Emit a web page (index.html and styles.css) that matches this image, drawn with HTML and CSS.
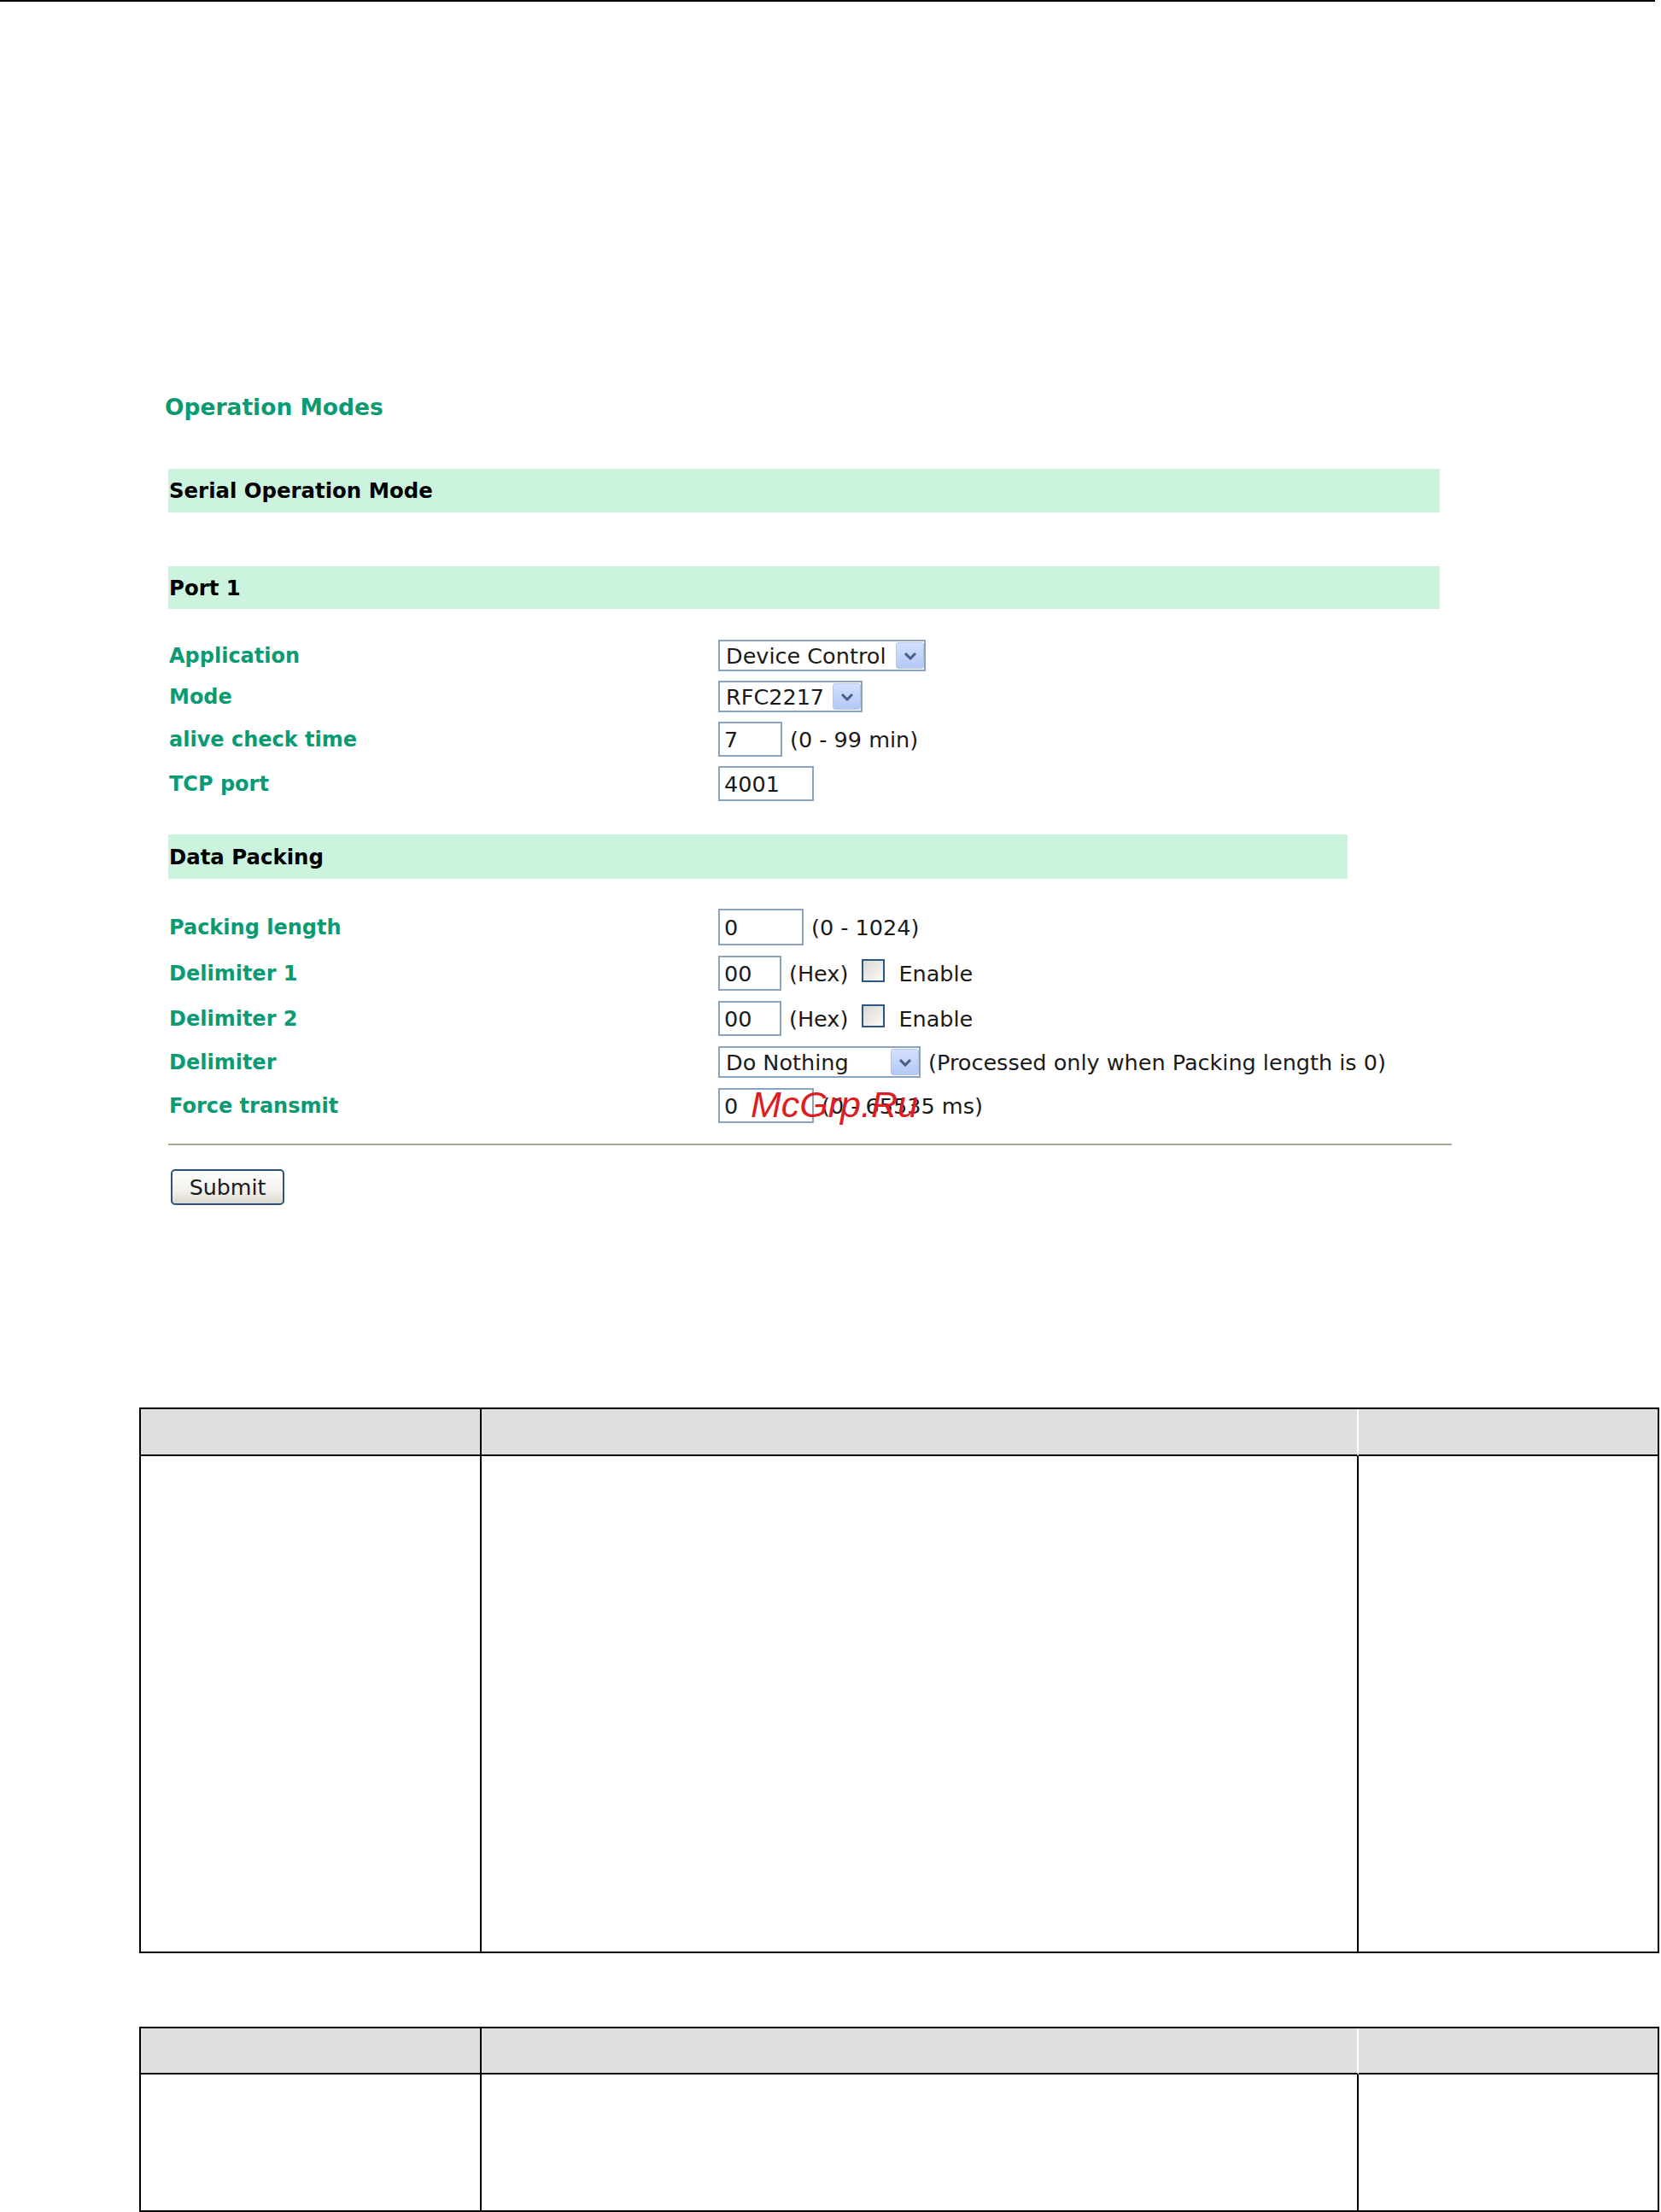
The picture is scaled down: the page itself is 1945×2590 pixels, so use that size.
FILE: index.html
```html
<!DOCTYPE html>
<html lang="en">
<head>
  <meta charset="UTF-8">
  <title>Operation Modes</title>
  <link rel="stylesheet" href="styles.css">
</head>
<body>
  <div class="topline"></div>

  <div class="panel">
    <h1 class="title">Operation Modes</h1>

    <div class="bar">Serial Operation Mode</div>
    <div class="bar port">Port 1</div>

    <div class="rows rows-port">
      <div class="row">
        <span class="label">Application</span>
        <div class="select w243">
          <span class="select-text">Device Control</span>
          <span class="arrow"><svg width="16" height="10" viewBox="0 0 16 10"><path d="M2 2 L8 8 L14 2" fill="none" stroke="#4b5d84" stroke-width="3"/></svg></span>
        </div>
      </div>
      <div class="row">
        <span class="label">Mode</span>
        <div class="select w169">
          <span class="select-text">RFC2217</span>
          <span class="arrow"><svg width="16" height="10" viewBox="0 0 16 10"><path d="M2 2 L8 8 L14 2" fill="none" stroke="#4b5d84" stroke-width="3"/></svg></span>
        </div>
      </div>
      <div class="row">
        <span class="label">alive check time</span>
        <input type="text" class="box w75" value="7">
        <span class="note">(0 - 99 min)</span>
      </div>
      <div class="row">
        <span class="label">TCP port</span>
        <input type="text" class="box w112" value="4001">
      </div>
    </div>

    <div class="bar short">Data Packing</div>

    <div class="rows rows-data">
      <div class="row">
        <span class="label">Packing length</span>
        <input type="text" class="box w100 tall" value="0">
        <span class="note">(0 - 1024)</span>
      </div>
      <div class="row">
        <span class="label">Delimiter 1</span>
        <input type="text" class="box w74" value="00">
        <span class="note">(Hex)</span>
        <input type="checkbox" class="check">
        <span>Enable</span>
      </div>
      <div class="row">
        <span class="label">Delimiter 2</span>
        <input type="text" class="box w74" value="00">
        <span class="note">(Hex)</span>
        <input type="checkbox" class="check">
        <span>Enable</span>
      </div>
      <div class="row">
        <span class="label">Delimiter</span>
        <div class="select w237">
          <span class="select-text">Do Nothing</span>
          <span class="arrow"><svg width="16" height="10" viewBox="0 0 16 10"><path d="M2 2 L8 8 L14 2" fill="none" stroke="#4b5d84" stroke-width="3"/></svg></span>
        </div>
        <span class="note">(Processed only when Packing length is 0)</span>
      </div>
      <div class="row">
        <span class="label">Force transmit</span>
        <input type="text" class="box w112" value="0">
        <span class="note">(0 - 65535 ms)</span>
      </div>
    </div>

    <hr class="rule">

    <button type="button" class="submit">Submit</button>
  </div>

  <div class="spec spec-a">
    <div class="th first"></div>
    <div class="th mid"></div>
    <div class="th"></div>
    <div class="td first"></div>
    <div class="td mid"></div>
    <div class="td"></div>
  </div>

  <div class="spec spec-b">
    <div class="th first"></div>
    <div class="th mid"></div>
    <div class="th"></div>
    <div class="td first"></div>
    <div class="td mid"></div>
    <div class="td"></div>
  </div>

  <div class="watermark">McGrp.Ru</div>
</body>
</html>
```

FILE: styles.css
```css
* {
  box-sizing: border-box;
}

body {
  margin: 0;
  font-family: "DejaVu Sans", Verdana, sans-serif;
  font-size: 25.5px;
  color: #1a1a1a;
  background-color: #fff;
}

.topline {
  width: 1938px;
  height: 2px;
  background-color: #000;
}

.panel {
  margin-left: 197px;
}

.title {
  margin: 459px 0 0 -4px;
  font-size: 26.5px;
  line-height: 31px;
  font-weight: bold;
  color: #0b9b72;
}

.bar {
  display: flex;
  align-items: center;
  width: 1489px;
  height: 51px;
  margin-top: 57px;
  padding-left: 1px;
  background-color: #ccf3dd;
  color: #000;
  font-size: 24.4px;
  font-weight: bold;
}

.bar.port {
  height: 50px;
  margin-top: 63px;
}

.bar.short {
  width: 1381px;
  height: 52px;
  margin-top: 39px;
}

.rows {
  display: flex;
  flex-direction: column;
}

.rows-port {
  margin-top: 36px;
  gap: 11px;
}

.rows-data {
  margin-top: 35px;
  gap: 12px;
}

.row {
  display: flex;
  align-items: center;
}

.label {
  width: 644px;
  flex-shrink: 0;
  padding-left: 1px;
  font-size: 24px;
  line-height: 28px;
  font-weight: bold;
  color: #0b9b72;
}

.box {
  height: 41px;
  margin: 0;
  padding: 0 5px;
  border: 2px solid #8aa3c0;
  font-family: "DejaVu Sans", Verdana, sans-serif;
  font-size: 25.5px;
  color: #1a1a1a;
  background-color: #fff;
}

.box.tall {
  height: 43px;
}

.w74 { width: 74px; }
.w75 { width: 75px; }
.w100 { width: 100px; }
.w112 { width: 112px; }
.w169 { width: 169px; }
.w237 { width: 237px; }
.w243 { width: 243px; }

.select {
  display: flex;
  align-items: center;
  height: 37px;
  border: 2px solid #8aa3c0;
  background-color: #fff;
}

.select-text {
  flex: 1;
  padding-left: 7px;
  white-space: nowrap;
}

.arrow {
  display: flex;
  align-items: center;
  justify-content: center;
  width: 33px;
  height: 31px;
  border: 1px solid #b7c8ee;
  border-radius: 3px;
  background: linear-gradient(#d3e0fd, #b4c8f4);
}

.note {
  margin-left: 9px;
  white-space: nowrap;
}

.check {
  appearance: none;
  width: 27px;
  height: 27px;
  margin: 0 16px 7px 16px;
  border: 2px solid #2a5785;
  background: linear-gradient(135deg, #d9d9d3, #fbfbf8);
}

.rule {
  width: 1503px;
  height: 2px;
  margin: 24px 0 0 0;
  border: none;
  background-color: #aba796;
}

.submit {
  display: block;
  width: 133px;
  height: 42px;
  margin: 28px 0 0 3px;
  padding: 0;
  border: 2px solid #2a5385;
  border-radius: 5px;
  background: linear-gradient(#ffffff, #f2f1ec 60%, #dcd8cc);
  font-family: "DejaVu Sans", Verdana, sans-serif;
  font-size: 25.3px;
  color: #1a1a1a;
}

.spec {
  display: grid;
  grid-template-columns: 399px 1027px 1fr;
  width: 1780px;
  margin-left: 163px;
  border: 2px solid #000;
}

.spec-a {
  grid-template-rows: 55px 580px;
  margin-top: 237px;
}

.spec-b {
  grid-template-rows: 54px 159px;
  margin-top: 86px;
}

.th {
  background-color: #dfdfdf;
  border-bottom: 2px solid #000;
}

.th.first,
.td.first {
  border-right: 2px solid #000;
}

.th.mid {
  border-right: 2px solid #fff;
}

.td.mid {
  border-right: 2px solid #000;
}

.watermark {
  position: absolute;
  top: 1272px;
  left: 879px;
  font-family: "Liberation Sans", Arial, sans-serif;
  font-style: italic;
  font-size: 43px;
  line-height: 43px;
  color: #dd1c24;
}
```
